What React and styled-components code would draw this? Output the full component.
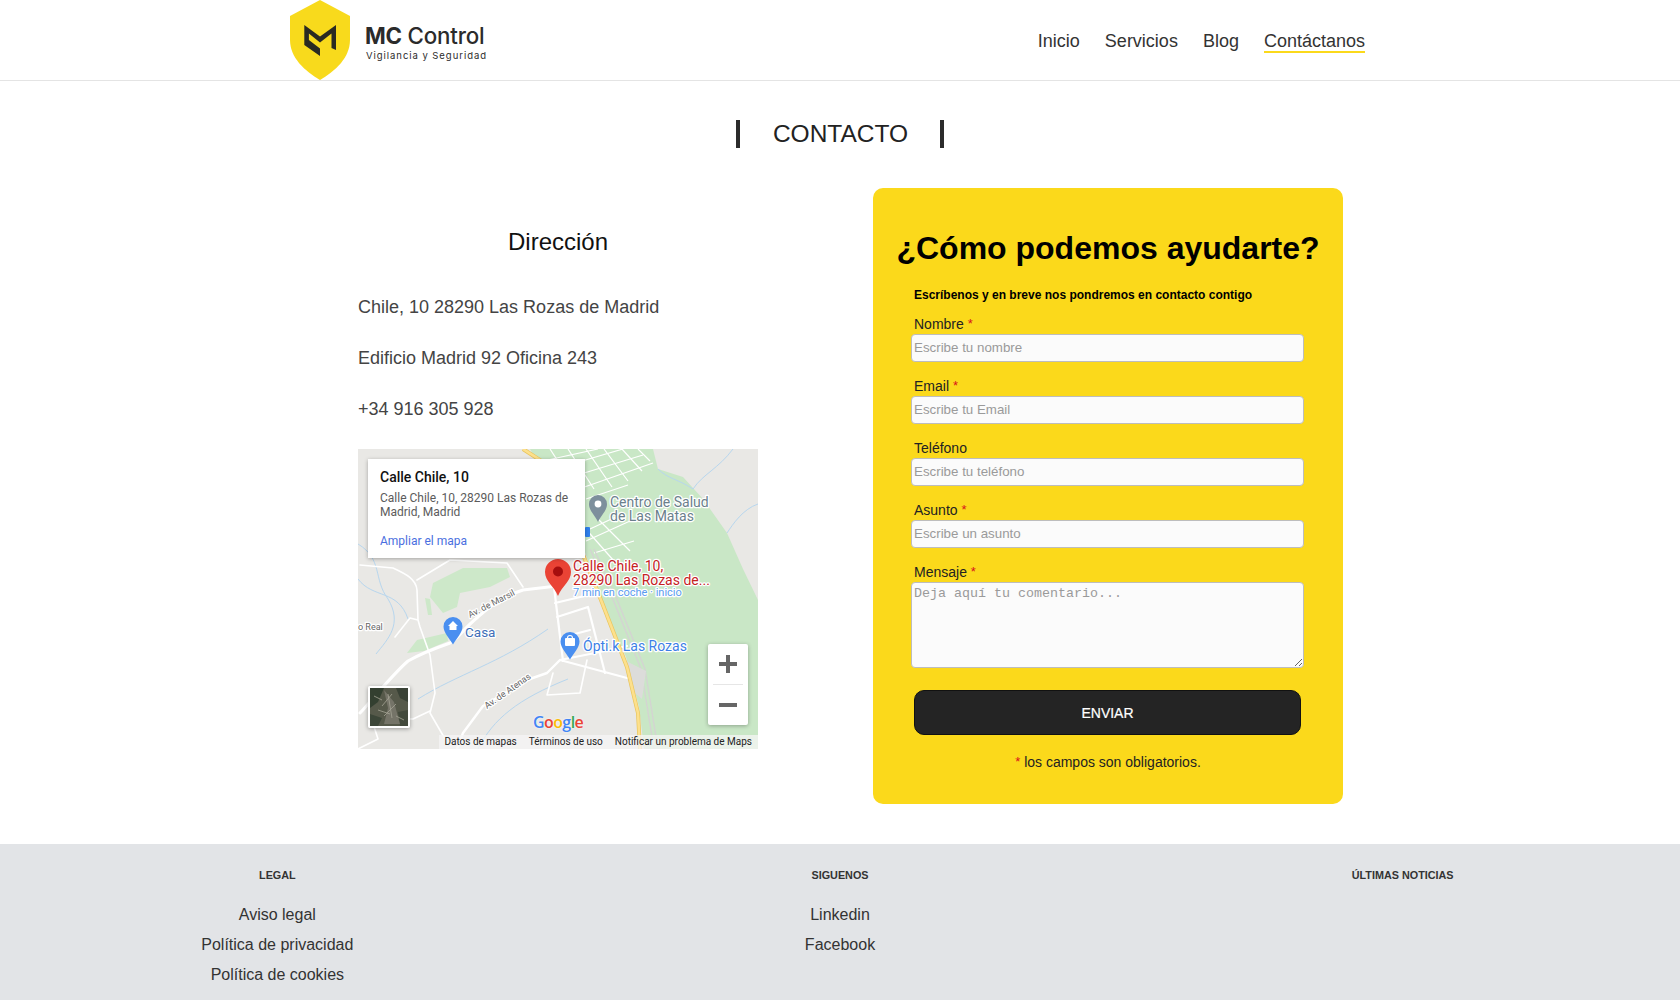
import React from "react"
import styled, { createGlobalStyle } from "styled-components"

const YELLOW = "#fbd91b"
const INK = "#333"

const GlobalStyle = createGlobalStyle`
  html, body {
    margin: 0;
    padding: 0;
    background: #fff;
    font-family: "Liberation Sans", Arial, sans-serif;
    color: ${INK};
  }
  * { box-sizing: border-box; }
`

/* Header */
const Header = styled.header`
  height: 81px;
  border-bottom: 1px solid #e4e4e4;
  display: flex;
  align-items: flex-start;
  justify-content: space-between;
  padding: 0 315px 0 290px;
`
const Brand = styled.a`
  display: flex;
  align-items: flex-start;
  gap: 15px;
  text-decoration: none;
  color: #2b2b2b;
`
const BrandText = styled.div`
  display: flex;
  flex-direction: column;
  padding-top: 22px;
`
const BrandName = styled.span`
  font-family: Inter, sans-serif;
  font-size: 22.3px;
  line-height: 28px;
  font-weight: 500;
  letter-spacing: -0.2px;
  white-space: nowrap;
  b { font-weight: 700; }
`
const BrandTag = styled.span`
  font-family: Inter, sans-serif;
  font-size: 9.5px;
  line-height: 12px;
  letter-spacing: 0.95px;
  white-space: nowrap;
  margin-left: 1px;
`
const Nav = styled.nav`
  display: flex;
  gap: 25px;
  padding-top: 31px;
`
const NavItem = styled.a`
  font-size: 18px;
  line-height: 20px;
  color: ${INK};
  text-decoration: none;
  border-bottom: 2px solid ${(p) => (p.$active ? YELLOW : "transparent")};
`

/* Title */
const TitleRow = styled.div`
  display: flex;
  justify-content: center;
  padding: 39px 0 40px;
`
const Title = styled.h1`
  margin: 0;
  height: 28px;
  padding: 0 32px 0 33px;
  border-left: 4px solid #2b2b2b;
  border-right: 4px solid #2b2b2b;
  font-size: 24.500px;
  line-height: 28px;
  font-weight: 400;
  color: #222;
`

/* Main */
const Main = styled.main`
  display: grid;
  grid-template-columns: 400px 470px;
  column-gap: 115px;
  padding-left: 358px;
  align-items: start;
`
const Address = styled.section`
  padding-top: 38px;
`
const AddressTitle = styled.h2`
  margin: 0 0 39px;
  text-align: center;
  font-size: 24px;
  line-height: 32px;
  font-weight: 400;
  color: #111;
`
const AddressLines = styled.div`
  display: flex;
  flex-direction: column;
  gap: 30px;
  margin-bottom: 29px;
`
const AddressLine = styled.p`
  margin: 0;
  font-size: 18px;
  line-height: 21px;
  color: #444;
`
const MapFrame = styled.div`
  position: relative;
  width: 400px;
  height: 300px;
  overflow: hidden;
  font-family: Roboto, sans-serif;
  background: #e9e8e5;
  svg.base { display: block; }
`
const InfoWindow = styled.div`
  position: absolute;
  left: 10px;
  top: 10px;
  width: 217px;
  height: 99px;
  padding: 9px 12px;
  background: #fff;
  box-shadow: 0 1px 4px rgba(0, 0, 0, 0.3);
`
const InfoTitle = styled.div`
  font-size: 14px;
  line-height: 18px;
  font-weight: 500;
  color: #111;
`
const InfoText = styled.div`
  margin-top: 5px;
  font-size: 12px;
  line-height: 14px;
  color: #5b5b5b;
`
const InfoLink = styled.a`
  display: block;
  margin-top: 15px;
  font-size: 12px;
  line-height: 14px;
  color: #4a6fe0;
`
const ZoomControl = styled.div`
  position: absolute;
  left: 350px;
  top: 195px;
  width: 40px;
  height: 81px;
  background: #fff;
  border-radius: 2px;
  box-shadow: 0 1px 4px rgba(0, 0, 0, 0.3);
  display: flex;
  flex-direction: column;
  align-items: center;
`
const ZoomButton = styled.div`
  width: 100%;
  flex: 1;
  display: flex;
  align-items: center;
  justify-content: center;
`
const ZoomDivider = styled.div`
  width: 30px;
  height: 1px;
  background: #e6e6e6;
`
const Thumb = styled.div`
  position: absolute;
  left: 10px;
  top: 237px;
  width: 42px;
  height: 42px;
  border: 2px solid #fff;
  border-radius: 2px;
  box-shadow: 0 1px 4px rgba(0, 0, 0, 0.35);
  overflow: hidden;
  line-height: 0;
`
const GoogleMark = styled.div`
  position: absolute;
  left: 175px;
  top: 263px;
  font-family: "Open Sans", sans-serif;
  font-size: 16px;
  font-weight: 600;
  line-height: 20px;
  letter-spacing: -0.6px;
  text-shadow: 0 0 2px #fff;
`
const Letter = styled.span`
  color: ${(p) => p.$c};
`
const Attribution = styled.div`
  position: absolute;
  right: 0;
  bottom: 0;
  height: 14px;
  display: flex;
  gap: 12px;
  padding: 0 6px 0 5px;
  background: rgba(245, 245, 245, 0.75);
  font-size: 10px;
  line-height: 14px;
  color: #222;
  white-space: nowrap;
`

/* Form card */
const Card = styled.section`
  height: 616px;
  padding: 40px 0 0;
  background: ${YELLOW};
  border-radius: 10px;
`
const CardTitle = styled.h2`
  margin: 0;
  text-align: center;
  font-size: 32px;
  line-height: 40px;
  font-weight: 700;
  color: #000;
  white-space: nowrap;
`
const Form = styled.form`
  padding: 0 38px;
`
const Intro = styled.p`
  margin: 19px 0 0 3px;
  font-size: 12px;
  line-height: 16px;
  font-weight: 700;
  color: #000;
`
const Field = styled.div`
  margin-top: ${(p) => (p.$first ? "13px" : "16px")};
`
const Label = styled.label`
  display: block;
  margin-left: 3px;
  font-size: 14px;
  line-height: 17px;
  color: #222;
`
const Star = styled.span`
  color: #d8121b;
  font-size: 13px;
  line-height: 0;
  vertical-align: 1px;
`
const TextInput = styled.input`
  display: block;
  width: 393px;
  height: 28px;
  margin-top: 1px;
  padding: 0 2px 2px;
  font-family: "Liberation Sans", Arial, sans-serif;
  font-size: 13.33px;
  background: #fbfbfb;
  border: 1px solid #bdbdbd;
  border-radius: 4px;
  outline: none;
  &::placeholder { color: #9a9a9a; }
`
const TextArea = styled.textarea`
  display: block;
  width: 393px;
  height: 86px;
  margin-top: 1px;
  padding: 3px 2px;
  font-family: "Liberation Mono", monospace;
  font-size: 13.33px;
  background: #fbfbfb;
  border: 1px solid #bdbdbd;
  border-radius: 4px;
  outline: none;
  &::placeholder { color: #9a9a9a; }
`
const Submit = styled.button`
  display: block;
  width: 387px;
  height: 45px;
  margin: 22px 0 0 3px;
  background: #242424;
  border: 1px solid #111;
  border-radius: 10px;
  color: #fff;
  font-family: "Liberation Sans", Arial, sans-serif;
  font-size: 14px;
  font-weight: 400;
  -webkit-text-stroke: 0.2px #fff;
`
const Note = styled.p`
  margin: 18px 0 0;
  text-align: center;
  font-size: 14px;
  line-height: 18px;
  color: #222;
`

/* Footer */
const Footer = styled.footer`
  margin-top: 40px;
  height: 157px;
  background: #e2e4e7;
  overflow: hidden;
`
const FooterGrid = styled.div`
  display: grid;
  grid-template-columns: repeat(3, 1fr);
  margin: 0 -4px;
  padding-top: 24px;
`
const FooterCol = styled.div`
  text-align: center;
`
const FooterTitle = styled.h3`
  margin: 0 0 18px;
  font-size: 10.8px;
  line-height: 14px;
  font-weight: 700;
  color: #333;
  text-transform: uppercase;
`
const FooterLink = styled.a`
  display: block;
  font-size: 16px;
  line-height: 30px;
  color: #333;
  text-decoration: none;
`

const Logo = () => (
  <svg width="60" height="80" viewBox="0 0 60 80">
    <path
      d="M30 0 L60 16 V40 C60 58 45 71 30 80 C15 71 0 58 0 40 V16 Z"
      fill="#f8da1c"
    />
    <path
      d="M14.3 25 L30 36.500 L46 25 V50 L41.500 48 V33.500 L30 42.500 L18.900 33.500 V40 L30 48.500 V56 L14.300 45 Z"
      fill="#2a2a22"
    />
  </svg>
)

const haloText = {
  paintOrder: "stroke",
  stroke: "#fff",
  strokeWidth: 2.5,
  strokeLinejoin: "round",
}

const Road = ({ d, w = 2.4 }) => (
  <path d={d} fill="none" stroke="#fff" strokeWidth={w} strokeLinecap="round" strokeLinejoin="round" />
)

const MapBase = () => (
  <svg className="base" width="400" height="300" viewBox="0 0 400 300">
    <rect width="400" height="300" fill="#e9e8e5" />
    {/* parque y zonas verdes */}
    <path
      d="M172 0 L295 0 L300 20 L325 28 L345 50 L369 84 L385 120 L400 151 V300 L286 300 L281 258 L268 208 L242 150 L226 100 L200 50 Z"
      fill="#c9e7c6"
    />
    <path
      d="M72 148 L75 134 L105 119 L149 119 L152 128 L132 138 L102 144 L99 158 L85 164 Z"
      fill="#cde8c9"
    />
    <path d="M49 204 L59 191 L89 184 L90 192 L66 202 Z" fill="#cde8c9" />
    <path d="M67 149 L72 150 L74 166 L70 166 Z" fill="#cde8c9" />
    {/* arroyos */}
    <g fill="none" stroke="#b7d6ee" strokeWidth="1">
      <path d="M0 95 C25 110 15 130 30 150 C45 175 30 190 18 205" />
      <path d="M0 130 C15 150 40 140 50 170" />
      <path d="M375 0 C360 20 345 25 335 40 C320 30 310 30 300 20" />
      <path d="M400 55 C385 60 375 75 369 84" />
      <path d="M60 250 C100 225 140 215 190 180" />
      <path d="M120 300 C135 270 160 250 210 230" />
    </g>
    {/* calles de Las Matas */}
    <g fill="none" stroke="#fff" strokeWidth="1.2">
      <path d="M185 12 L240 0 M190 22 L265 0 M200 32 L285 6 M215 42 L295 14 M228 50 L270 36" />
      <path d="M192 0 L218 40 M210 0 L236 40 M228 0 L254 38 M246 0 L270 32 M264 0 L284 22 M280 0 L292 12" />
      <path d="M228 92 L272 72 M232 80 L262 66 M236 104 L276 92 M240 70 L272 102 M226 78 L256 112" />
    </g>
    {/* vías del tren */}
    <g fill="none" stroke="#d4d4d2" strokeWidth="1.4">
      <path d="M232 100 L254 148 L283 220 L296 300" />
      <path d="M236 100 L258 148 L287 220 L300 300" />
    </g>
    <path d="M268 212 L288 222 L284 250 L272 240 Z" fill="#dcdcda" />
    {/* carreteras */}
    <Road w={3} d="M199 137 L165 141 C150 146 140 150 120 168 C105 180 100 190 92 194 C75 200 62 205 50 212 C35 225 15 250 2 264" />
    <Road w={2.2} d="M196 138 L205 212 M197 154 L239 144 M199 168 L230 158 L247 224 M205 188 L232 181" />
    <Road w={2.2} d="M202 211 L237 204 L269 197 M202 211 L269 229" />
    <Road w={1.6} d="M229 211 L222 244 L189 246 L195 224" />
    <Road d="M202 211 L189 224 L169 231 L125 257 L105 284 L99 300" />
    <Road w={1.6} d="M2 116 L35 119 C48 125 58 130 59 141 L60 171 L52 169 L37 188 M60 171 L62 178 L72 206 L77 244 L72 264 L90 295" />
    <Road w={1.6} d="M59 131 L92 111 L149 114 L165 138" />
    <Road w={1.6} d="M72 262 L55 270 L30 270 M12 265 L20 290 L0 300" />
    {/* autopista */}
    <path
      d="M165 0 L182 11 L226 108 L243 151 L269 218 L280 264 L282 300"
      fill="none"
      stroke="#e9c65e"
      strokeWidth="4"
    />
    <path
      d="M165 0 L182 11 L226 108 L243 151 L269 218 L280 264 L282 300"
      fill="none"
      stroke="#fde08c"
      strokeWidth="2.6"
    />
    {/* rótulos de calles */}
    <g fontSize="9" fill="#666" style={haloText}>
      <text x="0" y="181">o Real</text>
      <text transform="translate(112 169) rotate(-27)">Av. de Marsil</text>
      <text transform="translate(129 260) rotate(-35)">Av. de Atenas</text>
    </g>
    {/* bus */}
    <rect x="227" y="78" width="5" height="10" rx="1" fill="#2f80ed" />
    {/* Centro de Salud */}
    <path
      d="M240 46 a9 9 0 0 1 9 9 c0 7 -6 11 -9 18 c-3 -7 -9 -11 -9 -18 a9 9 0 0 1 9 -9 Z"
      fill="#7d8f9c"
    />
    <circle cx="240" cy="55" r="3.4" fill="#fff" />
    <g fontSize="14" fill="#6b7f8c" style={haloText}>
      <text x="252" y="58">Centro de Salud</text>
      <text x="252" y="72">de Las Matas</text>
    </g>
    {/* Casa */}
    <path
      d="M95 168 a9.500 9.500 0 0 1 9.500 9.500 c0 6 -6 12 -9.500 18 c-3.500 -6 -9.500 -12 -9.500 -18 a9.500 9.500 0 0 1 9.500 -9.500 Z"
      fill="#4a8ff0"
    />
    <path d="M95 172 L100 177 H98.500 V181 H91.500 V177 H90 Z" fill="#fff" />
    <text x="107" y="188" fontSize="13.5" fill="#3f6fb8" style={haloText}>Casa</text>
    {/* Ópti.k */}
    <path
      d="M212 183 a9.500 9.500 0 0 1 9.500 9.500 c0 6 -6 12 -9.500 18 c-3.500 -6 -9.500 -12 -9.500 -18 a9.500 9.500 0 0 1 9.500 -9.500 Z"
      fill="#4a8ff0"
    />
    <rect x="207" y="189" width="10" height="8" rx="1" fill="#fff" />
    <path d="M209.500 189 a2.500 2.500 0 0 1 5 0" fill="none" stroke="#fff" strokeWidth="1.1" />
    <text x="225" y="202" fontSize="14" fill="#3d7fe6" style={haloText}>Ópti.k Las Rozas</text>
    {/* destino */}
    <path
      d="M200 110 a13 13 0 0 1 13 13 c0 9 -9 14 -13 24 c-4 -10 -13 -15 -13 -24 a13 13 0 0 1 13 -13 Z"
      fill="#ea4335"
    />
    <circle cx="200" cy="122.500" r="5" fill="#a50e0e" />
    <g fontSize="14" fill="#c5221f" style={haloText}>
      <text x="215" y="122">Calle Chile, 10,</text>
      <text x="215" y="136">28290 Las Rozas de...</text>
    </g>
    <text x="215" y="147" fontSize="11" fill="#5a9bf0" style={haloText}>7 min en coche · inicio</text>
  </svg>
)

const SatelliteThumb = () => (
  <svg width="38" height="38" viewBox="0 0 38 38">
    <rect width="38" height="38" fill="#56594a" />
    <path d="M0 0 H14 L8 14 L0 20 Z" fill="#333f30" />
    <path d="M26 0 H38 V14 L30 10 Z" fill="#3a4236" />
    <path d="M0 26 L12 30 L8 38 H0 Z" fill="#3c4638" />
    <path d="M28 24 L38 22 V38 H30 Z" fill="#434a3c" />
    <path d="M14 2 L24 14 L30 36 L14 36 L18 20 Z" fill="#757468" />
    <path d="M18 6 L22 30 M26 16 L14 28 M22 6 L12 18 M8 22 L20 26 M26 28 L34 32 M4 8 L12 12" stroke="#a5a394" strokeWidth="0.8" fill="none" />
  </svg>
)

const Input = ({ id, label, required, placeholder, first }) => (
  <Field $first={first}>
    <Label htmlFor={id}>
      {label} {required && <Star>*</Star>}
    </Label>
    <TextInput id={id} placeholder={placeholder} />
  </Field>
)

const App = () => (
  <>
    <GlobalStyle />
    <Header>
      <Brand href="#">
        <Logo />
        <BrandText>
          <BrandName>
            <b>MC</b> Control
          </BrandName>
          <BrandTag>Vigilancia y Seguridad</BrandTag>
        </BrandText>
      </Brand>
      <Nav>
        <NavItem href="#">Inicio</NavItem>
        <NavItem href="#">Servicios</NavItem>
        <NavItem href="#">Blog</NavItem>
        <NavItem href="#" $active>
          Contáctanos
        </NavItem>
      </Nav>
    </Header>

    <TitleRow>
      <Title>CONTACTO</Title>
    </TitleRow>

    <Main>
      <Address>
        <AddressTitle>Dirección</AddressTitle>
        <AddressLines>
          <AddressLine>Chile, 10 28290 Las Rozas de Madrid</AddressLine>
          <AddressLine>Edificio Madrid 92 Oficina 243</AddressLine>
          <AddressLine>+34 916 305 928</AddressLine>
        </AddressLines>
        <MapFrame>
          <MapBase />
          <InfoWindow>
            <InfoTitle>Calle Chile, 10</InfoTitle>
            <InfoText>Calle Chile, 10, 28290 Las Rozas de Madrid, Madrid</InfoText>
            <InfoLink>Ampliar el mapa</InfoLink>
          </InfoWindow>
          <Thumb>
            <SatelliteThumb />
          </Thumb>
          <ZoomControl>
            <ZoomButton>
              <svg width="18" height="18" viewBox="0 0 18 18">
                <path d="M7 0 H11 V7 H18 V11 H11 V18 H7 V11 H0 V7 H7 Z" fill="#666" />
              </svg>
            </ZoomButton>
            <ZoomDivider />
            <ZoomButton>
              <svg width="18" height="18" viewBox="0 0 18 18">
                <rect y="7" width="18" height="4" fill="#666" />
              </svg>
            </ZoomButton>
          </ZoomControl>
          <GoogleMark>
            <Letter $c="#4285f4">G</Letter>
            <Letter $c="#ea4335">o</Letter>
            <Letter $c="#fbbc05">o</Letter>
            <Letter $c="#4285f4">g</Letter>
            <Letter $c="#34a853">l</Letter>
            <Letter $c="#ea4335">e</Letter>
          </GoogleMark>
          <Attribution>
            <span>Datos de mapas</span>
            <span>Términos de uso</span>
            <span>Notificar un problema de Maps</span>
          </Attribution>
        </MapFrame>
      </Address>

      <Card>
        <CardTitle>¿Cómo podemos ayudarte?</CardTitle>
        <Form>
          <Intro>Escríbenos y en breve nos pondremos en contacto contigo</Intro>
          <Input id="nombre" label="Nombre" required placeholder="Escribe tu nombre" first />
          <Input id="email" label="Email" required placeholder="Escribe tu Email" />
          <Input id="telefono" label="Teléfono" placeholder="Escribe tu teléfono" />
          <Input id="asunto" label="Asunto" required placeholder="Escribe un asunto" />
          <Field>
            <Label htmlFor="mensaje">
              Mensaje <Star>*</Star>
            </Label>
            <TextArea id="mensaje" placeholder="Deja aquí tu comentario..." />
          </Field>
          <Submit type="button">ENVIAR</Submit>
          <Note>
            <Star>*</Star> los campos son obligatorios.
          </Note>
        </Form>
      </Card>
    </Main>

    <Footer>
      <FooterGrid>
        <FooterCol>
          <FooterTitle>Legal</FooterTitle>
          <FooterLink href="#">Aviso legal</FooterLink>
          <FooterLink href="#">Política de privacidad</FooterLink>
          <FooterLink href="#">Política de cookies</FooterLink>
        </FooterCol>
        <FooterCol>
          <FooterTitle>Siguenos</FooterTitle>
          <FooterLink href="#">Linkedin</FooterLink>
          <FooterLink href="#">Facebook</FooterLink>
        </FooterCol>
        <FooterCol>
          <FooterTitle>Últimas noticias</FooterTitle>
        </FooterCol>
      </FooterGrid>
    </Footer>
  </>
)

export default App
